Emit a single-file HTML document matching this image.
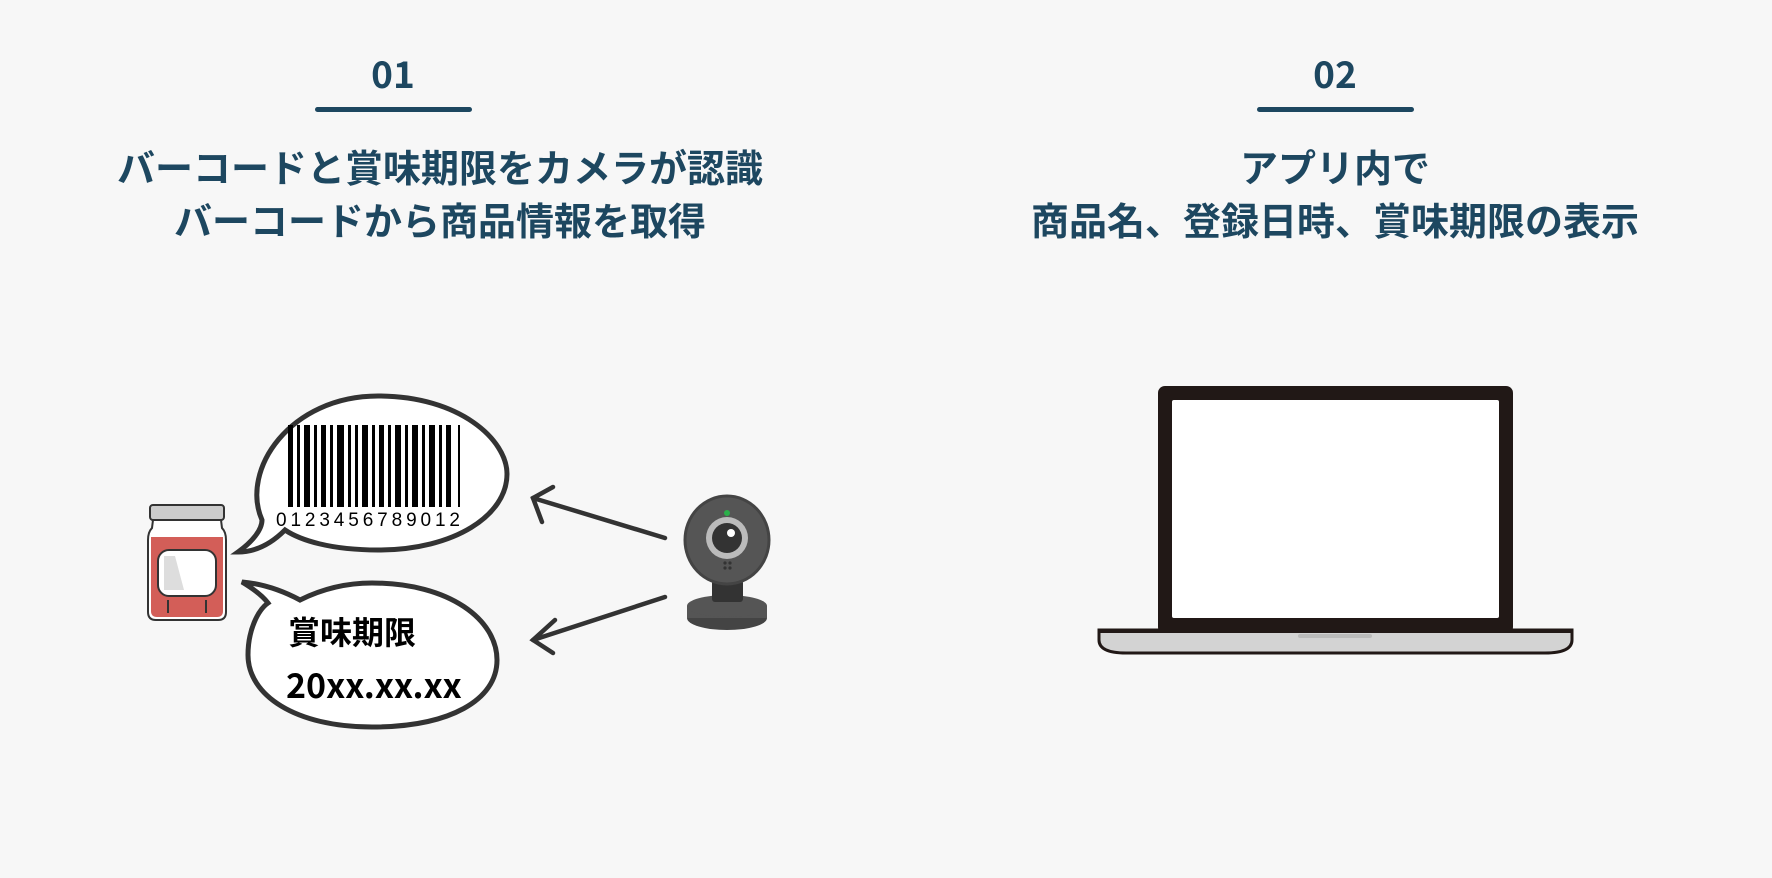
<!DOCTYPE html>
<html><head><meta charset="utf-8"><style>
html,body{margin:0;padding:0;width:1772px;height:878px;background:#f7f7f7;overflow:hidden}
body{position:relative;font-family:"Liberation Sans","Noto Sans CJK JP",sans-serif;color:#1d4760}
.num{position:absolute;width:300px;text-align:center;font-weight:bold;font-size:37px;line-height:40px;font-family:"Noto Sans CJK JP",sans-serif}
.bar{position:absolute;height:5px;border-radius:3px;background:#1d4760}
.t{position:absolute;width:900px;text-align:center;font-weight:bold;font-size:38px;line-height:53px;font-family:"Noto Sans CJK JP",sans-serif}
svg{position:absolute;left:0;top:0}
</style></head><body>
<div class="num" style="left:243px;top:52px">01</div>
<div class="bar" style="left:315px;top:107px;width:157px"></div>
<div class="t" style="left:-10px;top:139px">バーコードと賞味期限をカメラが認識<br>バーコードから商品情報を取得</div>
<div class="num" style="left:1185px;top:52px">02</div>
<div class="bar" style="left:1257px;top:107px;width:157px"></div>
<div class="t" style="left:885px;top:139px">アプリ内で<br>商品名、登録日時、賞味期限の表示</div>
<svg width="1772" height="878" viewBox="0 0 1772 878">
<path d="M262 520 C240 470 290 396 378 396 C460 396 507 440 507 474 C507 515 455 550 378 550 C330 550 300 540 285 530 C270 545 255 552 238 552 C252 542 262 530 262 520 Z" fill="#fff" stroke="#333" stroke-width="5"/>
<g fill="#000">
<rect x="288" y="425" width="5" height="82"/><rect x="297" y="425" width="3" height="82"/><rect x="304" y="425" width="6" height="82"/><rect x="314" y="425" width="3" height="82"/><rect x="321" y="425" width="5" height="82"/><rect x="330" y="425" width="3" height="82"/><rect x="337" y="425" width="7" height="82"/><rect x="348" y="425" width="3" height="82"/><rect x="355" y="425" width="3" height="82"/><rect x="362" y="425" width="6" height="82"/><rect x="372" y="425" width="3" height="82"/><rect x="379" y="425" width="5" height="82"/><rect x="388" y="425" width="3" height="82"/><rect x="395" y="425" width="6" height="82"/><rect x="405" y="425" width="3" height="82"/><rect x="412" y="425" width="6" height="82"/><rect x="422" y="425" width="3" height="82"/><rect x="429" y="425" width="6" height="82"/><rect x="439" y="425" width="3" height="82"/><rect x="446" y="425" width="5" height="82"/><rect x="458" y="425" width="2" height="82"/>
</g>
<text x="276" y="526" font-family="Liberation Sans Narrow,Liberation Sans,sans-serif" font-size="19" textLength="184" fill="#000">0123456789012</text>
<path d="M242 582 C265 584 285 592 300 600 C320 590 345 583 372 583 C450 583 497 620 497 660 C497 700 450 727 372 727 C295 727 248 695 248 655 C248 630 258 610 268 603 C262 595 252 588 242 582 Z" fill="#fff" stroke="#333" stroke-width="5"/>
<text x="288" y="644" font-family="Noto Sans CJK JP,sans-serif" font-weight="bold" font-size="32" fill="#000">賞味期限</text>
<text x="286" y="698" font-family="Noto Sans CJK JP,sans-serif" font-weight="bold" font-size="34" fill="#000">20xx.xx.xx</text>
<rect x="150" y="505" width="74" height="15" rx="3" fill="#ccc" stroke="#333" stroke-width="2"/>
<path d="M153 520 L221 520 L222 528 Q226 532 226 540 L226 612 Q226 620 218 620 L156 620 Q148 620 148 612 L148 540 Q148 532 152 528 Z" fill="#fff" stroke="#333" stroke-width="2"/>
<path d="M151 537 L223 537 L223 611 Q223 617 217 617 L157 617 Q151 617 151 611 Z" fill="#d35e58"/>
<rect x="158" y="550" width="58" height="46" rx="11" fill="#fff" stroke="#333" stroke-width="2"/>
<path d="M164 556 L175 556 L184 590 L164 590 Z" fill="#ddd"/>
<line x1="168" y1="600" x2="168" y2="613" stroke="#333" stroke-width="2"/><line x1="206" y1="600" x2="206" y2="613" stroke="#333" stroke-width="2"/>
<g stroke="#333" stroke-width="4.5" fill="none" stroke-linecap="round">
<line x1="665" y1="538" x2="533" y2="498"/><polyline points="553,487 533,498 542,522"/>
<line x1="665" y1="597" x2="533" y2="640"/><polyline points="555,620 533,640 553,653"/>
</g>
<ellipse cx="727" cy="618" rx="40" ry="12" fill="#444"/>
<rect x="687" y="606" width="80" height="12" fill="#555"/>
<ellipse cx="727" cy="606" rx="40" ry="11" fill="#555"/>
<rect x="712" y="580" width="31" height="22" rx="3" fill="#333"/>
<ellipse cx="727" cy="540" rx="42" ry="44" fill="#555" stroke="#444" stroke-width="3"/>
<circle cx="727" cy="538" r="21" fill="#bbb"/>
<circle cx="727" cy="538" r="15" fill="#333"/>
<circle cx="731" cy="533" r="4" fill="#fff"/>
<circle cx="727" cy="513" r="3" fill="#2bb04a"/>
<g fill="#333"><circle cx="725" cy="563" r="1.6"/><circle cx="730" cy="563" r="1.6"/><circle cx="725" cy="568" r="1.6"/><circle cx="730" cy="568" r="1.6"/></g>
<rect x="1158" y="386" width="355" height="248" rx="7" fill="#211816"/>
<rect x="1172" y="400" width="327" height="218" rx="2" fill="#fff"/>
<path d="M1099 630 L1572 630 L1572 640 Q1572 653 1545 653 L1126 653 Q1099 653 1099 640 Z" fill="#d3d3d3" stroke="#211816" stroke-width="3"/>
<rect x="1099" y="629" width="473" height="4" fill="#211816"/>
<rect x="1298" y="634" width="74" height="4" rx="2" fill="#bbb"/>
</svg>
</body></html>
